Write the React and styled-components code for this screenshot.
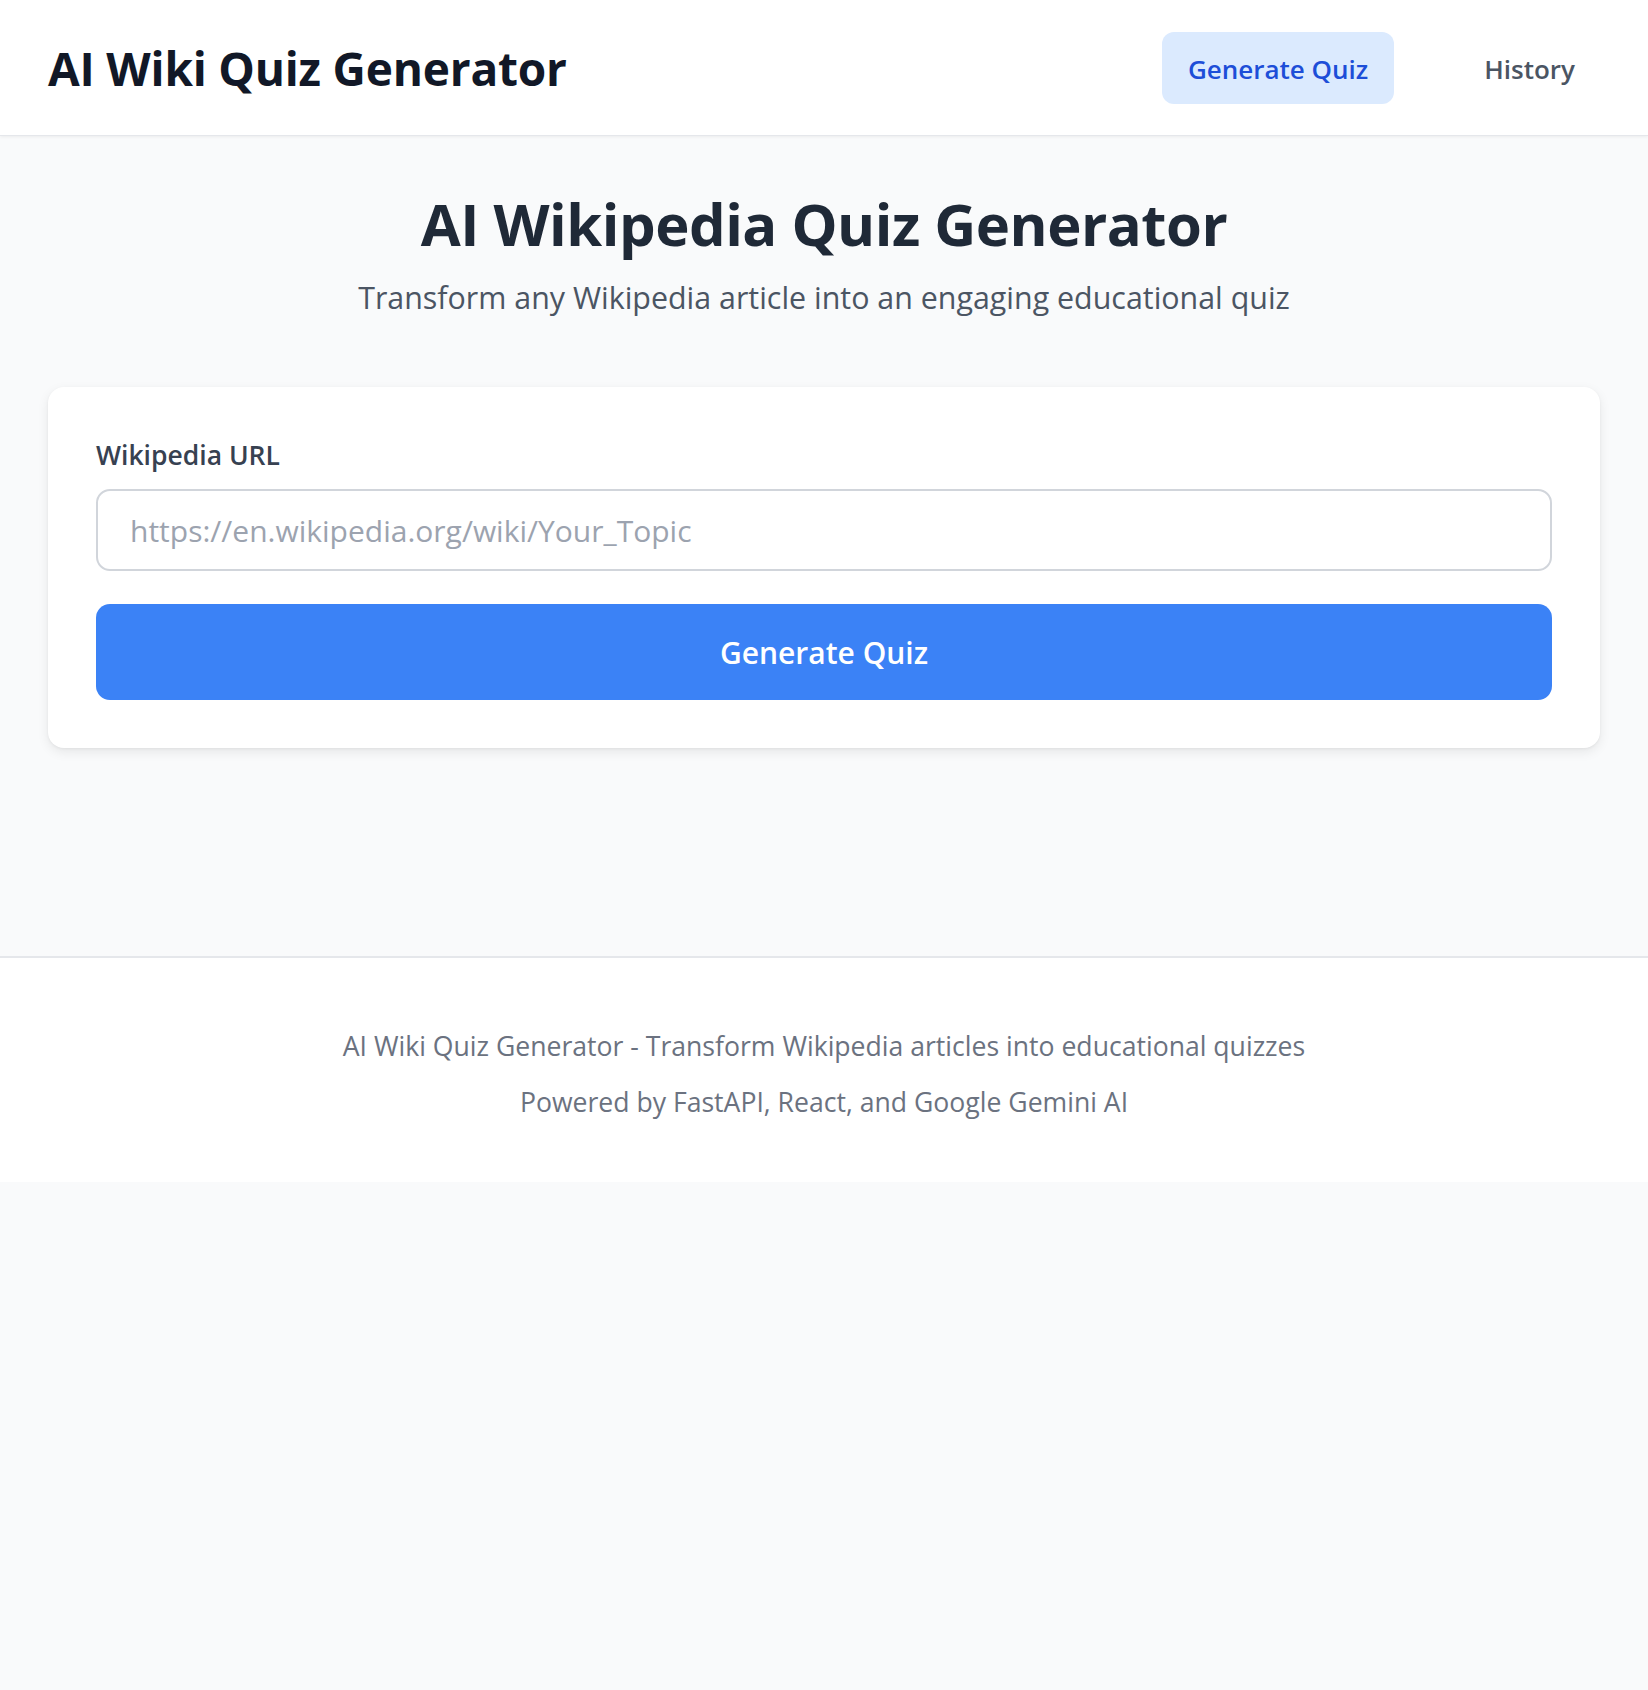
import React, { useState } from "react";
import styled, { createGlobalStyle } from "styled-components";

const GlobalStyle = createGlobalStyle`
  * { box-sizing: border-box; }
  body {
    margin: 0;
    background: #f9fafb;
    font-family: "Open Sans", "Noto Sans", sans-serif;
    color: #1f2937;
  }
`;

const Header = styled.header`
  height: 136px;
  background: #ffffff;
  border-bottom: 1px solid #e5e7eb;
  box-shadow: 0 1px 3px rgba(0, 0, 0, 0.06);
  display: flex;
  align-items: center;
  justify-content: space-between;
  padding: 0 47px 0 48px;
`;

const Brand = styled.h1`
  margin: 0;
  font-size: 46px;
  font-weight: 700;
  color: #111827;
  letter-spacing: -0.2px;
`;

const Nav = styled.nav`
  display: flex;
  align-items: center;
  gap: 64px;
`;

const NavButton = styled.button`
  height: 72px;
  padding: 3px 26px 0;
  border: none;
  border-radius: 12px;
  font-family: inherit;
  font-size: 26px;
  font-weight: 600;
  cursor: pointer;
  background: ${(p) => (p.$active ? "#dbeafe" : "transparent")};
  color: ${(p) => (p.$active ? "#1d4ed8" : "#4b5563")};
`;

const Main = styled.main`
  padding: 48px 48px 208px;
`;

const Hero = styled.div`
  text-align: center;
  margin-bottom: 69px;
`;

const Heading = styled.h2`
  margin: 0 0 14px;
  font-size: 58px;
  font-weight: 700;
  color: #1f2937;
  letter-spacing: -0.5px;
`;

const Subtitle = styled.p`
  margin: 0;
  font-size: 30.4px;
  color: #4b5563;
`;

const Card = styled.form`
  background: #ffffff;
  border-radius: 16px;
  box-shadow: 0 4px 12px rgba(0, 0, 0, 0.08), 0 1px 3px rgba(0, 0, 0, 0.05);
  padding: 50px 48px 48px;
  display: flex;
  flex-direction: column;
`;

const Label = styled.label`
  font-size: 26.5px;
  font-weight: 600;
  color: #374151;
  margin-bottom: 16px;
`;

const Input = styled.input`
  height: 82px;
  padding: 0 32px;
  border: 2px solid #d1d5db;
  border-radius: 14px;
  font-family: inherit;
  font-size: 30px;
  color: #1f2937;
  outline: none;
  margin-bottom: 33px;
  &::placeholder {
    color: #9ca3af;
  }
`;

const SubmitButton = styled.button`
  height: 96px;
  border: none;
  border-radius: 14px;
  background: #3b82f6;
  color: #ffffff;
  font-family: inherit;
  font-size: 30px;
  font-weight: 600;
  cursor: pointer;
`;

const Footer = styled.footer`
  background: #ffffff;
  border-top: 2px solid #e5e7eb;
  padding: 60px 48px 52px;
  text-align: center;
  color: #6b7280;
`;

const FooterLine = styled.p`
  margin: 0;
  font-size: 26.6px;
  line-height: 56px;
`;

export default function App() {
  const [url, setUrl] = useState("");

  return (
    <>
      <GlobalStyle />
      <Header>
        <Brand>AI Wiki Quiz Generator</Brand>
        <Nav>
          <NavButton $active>Generate Quiz</NavButton>
          <NavButton>History</NavButton>
        </Nav>
      </Header>
      <Main>
        <Hero>
          <Heading>AI Wikipedia Quiz Generator</Heading>
          <Subtitle>Transform any Wikipedia article into an engaging educational quiz</Subtitle>
        </Hero>
        <Card onSubmit={(e) => e.preventDefault()}>
          <Label htmlFor="wiki-url">Wikipedia URL</Label>
          <Input
            id="wiki-url"
            type="text"
            placeholder="https://en.wikipedia.org/wiki/Your_Topic"
            value={url}
            onChange={(e) => setUrl(e.target.value)}
          />
          <SubmitButton type="submit">Generate Quiz</SubmitButton>
        </Card>
      </Main>
      <Footer>
        <FooterLine>AI Wiki Quiz Generator - Transform Wikipedia articles into educational quizzes</FooterLine>
        <FooterLine>Powered by FastAPI, React, and Google Gemini AI</FooterLine>
      </Footer>
    </>
  );
}
